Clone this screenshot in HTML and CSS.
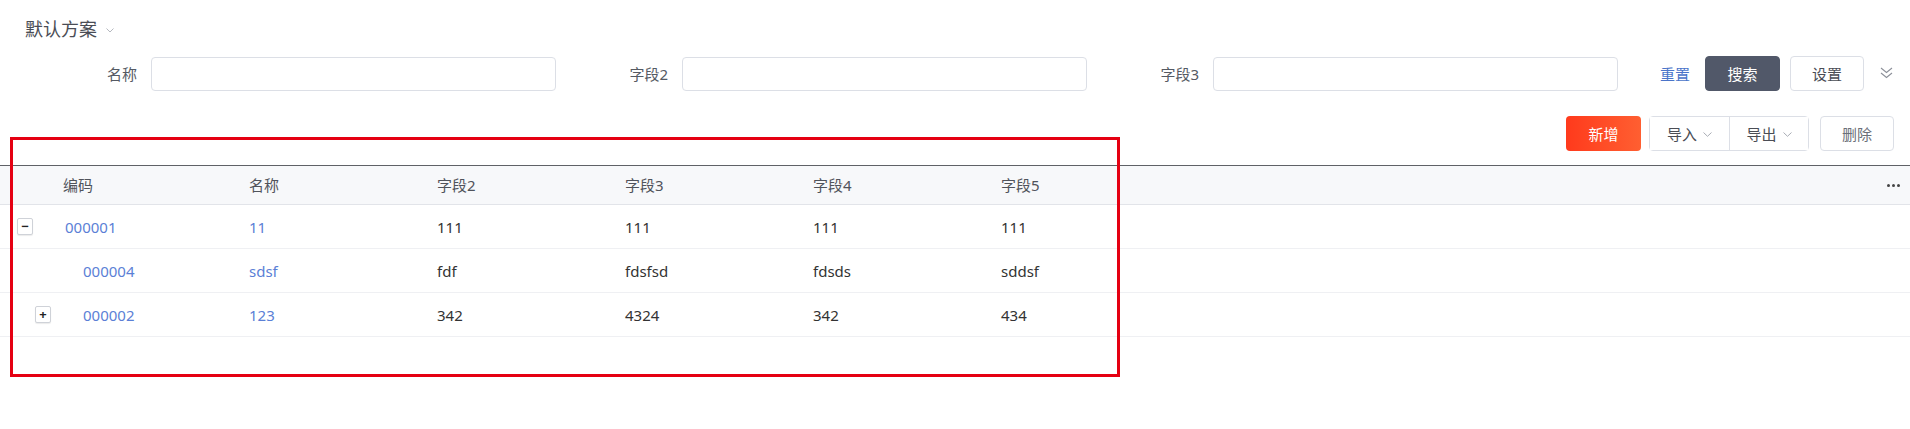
FILE: index.html
```html
<!DOCTYPE html>
<html lang="zh-CN">
<head>
<meta charset="utf-8">
<title>列表</title>
<link rel="stylesheet" href="styles.css">
</head>
<body>
<div class="page">
  <div class="scheme">
    <span class="scheme-name">默认方案</span>
    <svg class="scheme-caret" width="8" height="5" viewBox="0 0 8 5"><path d="M0.5 0.5 L4 4 L7.5 0.5" fill="none" stroke="#b5b8bf" stroke-width="1"/></svg>
  </div>

  <div class="search-row">
    <div class="field"><span class="field-label">名称</span><input class="field-input" type="text"></div>
    <div class="field"><span class="field-label">字段2</span><input class="field-input" type="text"></div>
    <div class="field"><span class="field-label">字段3</span><input class="field-input" type="text"></div>
    <div class="search-actions">
      <span class="link-reset">重置</span>
      <button class="btn btn-dark">搜索</button>
      <button class="btn btn-plain">设置</button>
      <svg class="collapse-icon" width="13" height="12" viewBox="0 0 13 12"><path d="M1 1 L6.5 5.5 L12 1 M1 6 L6.5 10.5 L12 6" fill="none" stroke="#8c9099" stroke-width="1.1"/></svg>
    </div>
  </div>

  <div class="toolbar">
    <button class="btn btn-primary">新增</button>
    <div class="btn-group">
      <button class="btn-seg">导入<svg class="seg-caret" width="9" height="5" viewBox="0 0 9 5"><path d="M0.5 0.5 L4.5 4.3 L8.5 0.5" fill="none" stroke="#a9adb5" stroke-width="1"/></svg></button>
      <button class="btn-seg">导出<svg class="seg-caret" width="9" height="5" viewBox="0 0 9 5"><path d="M0.5 0.5 L4.5 4.3 L8.5 0.5" fill="none" stroke="#a9adb5" stroke-width="1"/></svg></button>
    </div>
    <button class="btn btn-plain btn-muted">删除</button>
  </div>

  <div class="table">
    <div class="tr thead">
      <div class="td first">编码</div>
      <div class="td">名称</div>
      <div class="td">字段2</div>
      <div class="td">字段3</div>
      <div class="td">字段4</div>
      <div class="td">字段5</div>
      <div class="td more"><span class="dot"></span><span class="dot"></span><span class="dot"></span></div>
    </div>
    <div class="tr">
      <div class="td first"><span class="expander">−</span><span class="link">000001</span></div>
      <div class="td"><span class="link">11</span></div>
      <div class="td">111</div>
      <div class="td">111</div>
      <div class="td">111</div>
      <div class="td">111</div>
      <div class="td"></div>
    </div>
    <div class="tr">
      <div class="td first indent"><span class="expander-space"></span><span class="link">000004</span></div>
      <div class="td"><span class="link">sdsf</span></div>
      <div class="td">fdf</div>
      <div class="td">fdsfsd</div>
      <div class="td">fdsds</div>
      <div class="td">sddsf</div>
      <div class="td"></div>
    </div>
    <div class="tr">
      <div class="td first indent"><span class="expander">+</span><span class="link">000002</span></div>
      <div class="td"><span class="link">123</span></div>
      <div class="td">342</div>
      <div class="td">4324</div>
      <div class="td">342</div>
      <div class="td">434</div>
      <div class="td"></div>
    </div>
  </div>

  <div class="annotation"></div>
</div>
</body>
</html>
```

FILE: styles.css
```css
* { box-sizing: border-box; }
html, body { margin: 0; padding: 0; background: #ffffff; }
body {
  font-family: "Noto Sans", "Noto Sans CJK SC", sans-serif;
  font-size: 15px;
  color: #333333;
}
.page {
  position: relative;
  width: 1910px;
  height: 429px;
  overflow: hidden;
}

/* scheme title */
.scheme {
  display: flex;
  align-items: center;
  height: 24px;
  margin-top: 17px;
  padding-left: 25px;
}
.scheme-name {
  font-size: 18px;
  line-height: 24px;
  color: #4a4d55;
}
.scheme-caret { margin-left: 9px; margin-top: 2px; }

/* search row */
.search-row {
  display: flex;
  align-items: center;
  height: 35px;
  margin-top: 15px;
  padding-left: 25px;
}
.field {
  display: grid;
  grid-template-columns: 112px 405px;
  column-gap: 14px;
  align-items: center;
}
.field-label {
  text-align: right;
  color: #555a63;
  line-height: 20px;
}
.field-input {
  height: 34px;
  border: 1px solid #dcdfe6;
  border-radius: 4px;
  background: #fff;
  outline: none;
  font: inherit;
  padding: 0 10px;
}
.search-actions {
  display: flex;
  align-items: center;
  margin-left: 42px;
}
.link-reset {
  color: #4a74c9;
  line-height: 20px;
  margin-right: 15px;
}
.btn {
  height: 35px;
  width: 75px;
  border-radius: 4px;
  font: inherit;
  font-size: 15px;
  padding: 0;
  cursor: pointer;
}
.btn-dark {
  background: #515869;
  border: 1px solid #515869;
  color: #ffffff;
  margin-right: 10px;
}
.btn-plain {
  background: #ffffff;
  border: 1px solid #dcdfe6;
  color: #4a4d55;
  width: 74px;
}
.btn-muted { color: #6b6f78; }
.collapse-icon { margin-left: 16px; margin-top: -2px; }

/* toolbar */
.toolbar {
  display: flex;
  justify-content: flex-end;
  align-items: center;
  height: 35px;
  margin-top: 25px;
  padding-right: 16px;
}
.btn-primary {
  background: linear-gradient(90deg, #ff3a1c, #ff5f31);
  border: none;
  color: #ffffff;
  margin-right: 8px;
}
.btn-group {
  display: flex;
  height: 35px;
  border: 1px solid #dcdfe6;
  border-radius: 4px;
  margin-right: 11px;
}
.btn-seg {
  width: 79px;
  height: 33px;
  border: none;
  background: #fff;
  font: inherit;
  color: #4a4d55;
  display: flex;
  align-items: center;
  justify-content: center;
  gap: 6px;
  padding: 0;
}
.btn-seg + .btn-seg { border-left: 1px solid #dcdfe6; }
.seg-caret { margin-top: 1px; }

/* table */
.table {
  margin-top: 14px;
  border-top: 1px solid #5f6166;
}
.tr {
  display: grid;
  grid-template-columns: 237px repeat(5, 188px) 1fr;
  height: 44px;
  border-bottom: 1px solid #eff0f3;
  align-items: center;
}
.thead {
  height: 39px;
  background: #f7f8fa;
  border-bottom: 1px solid #e2e4e9;
  color: #50535b;
}
.td {
  padding-left: 12px;
  line-height: 20px;
  white-space: nowrap;
  display: flex;
  align-items: center;
}
.td.first { padding-left: 63px; }
.tr:not(.thead) .td.first { padding-left: 17px; }
.tr:not(.thead) .td.first.indent { padding-left: 35px; }
.link { color: #5b7fd6; }
.expander {
  width: 16px;
  height: 17px;
  border: 1px solid #cfd2d8;
  border-radius: 2px;
  background: #fff;
  box-shadow: 0 1px 1px rgba(0,0,0,0.08);
  display: inline-flex;
  align-items: center;
  justify-content: center;
  font-size: 13px;
  font-weight: bold;
  line-height: 1;
  color: #222;
  margin-right: 32px;
}
.expander-space { width: 16px; margin-right: 32px; display: inline-block; }
.more {
  justify-content: flex-end;
  padding-right: 10px;
  gap: 2px;
}
.dot {
  width: 3px;
  height: 3px;
  background: #444;
  border-radius: 50%;
}

/* annotation overlay */
.annotation {
  position: absolute;
  left: 10px;
  top: 137px;
  width: 1110px;
  height: 240px;
  border: 3px solid #e50012;
  pointer-events: none;
}
```
